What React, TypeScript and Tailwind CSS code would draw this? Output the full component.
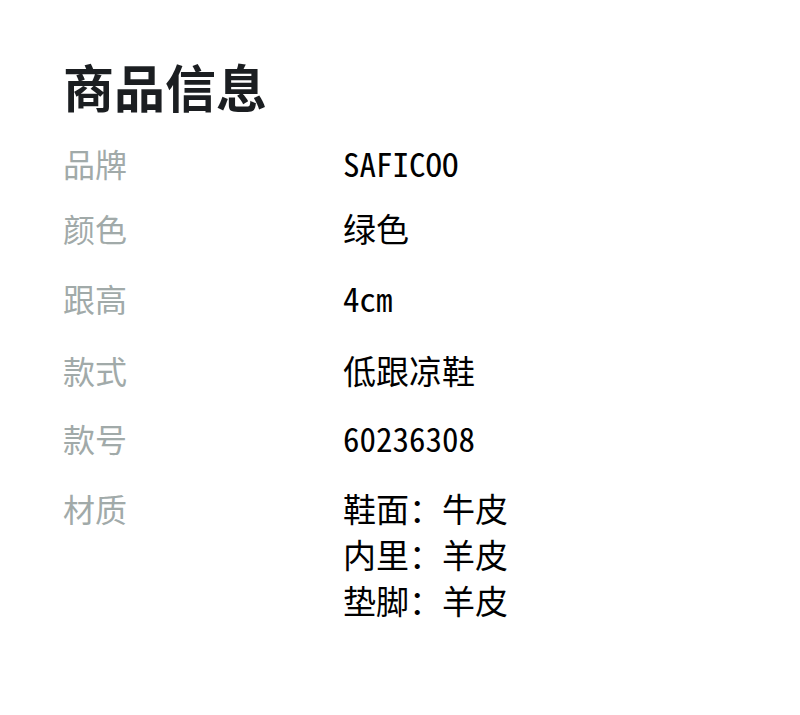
const rows = [
  { label: "品牌", value: ["SAFICOO"], gap: "mt-0" },
  { label: "颜色", value: ["绿色"], gap: "mt-[19px]" },
  { label: "跟高", value: ["4cm"], gap: "mt-[24px]" },
  { label: "款式", value: ["低跟凉鞋"], gap: "mt-[26px]" },
  { label: "款号", value: ["60236308"], gap: "mt-[22px]" },
  { label: "材质", value: ["鞋面：牛皮", "内里：羊皮", "垫脚：羊皮"], gap: "mt-[24px]" },
];

export default function App() {
  return (
    <div className="w-[800px] h-[715px] bg-white pl-[63px] pt-[61px] font-['Noto_Sans_CJK_SC',sans-serif]">
      {/* 标题 */}
      <h1 className="text-[51px] leading-[50px] font-bold text-[#1b1e21]">商品信息</h1>

      <div className="mt-[29px] flex flex-col">
        {rows.map((r) => (
          <div key={r.label} className={`flex ${r.gap}`}>
            <div className="w-[280px] text-[32px] leading-[46px] text-[#a1aaa9]">{r.label}</div>
            <div className="flex flex-col text-[33px] leading-[46px] text-black font-['Noto_Sans_Mono_CJK_SC','DejaVu_Sans_Mono',monospace]">
              {r.value.map((v) => (
                <span key={v}>{v}</span>
              ))}
            </div>
          </div>
        ))}
      </div>
    </div>
  );
}
